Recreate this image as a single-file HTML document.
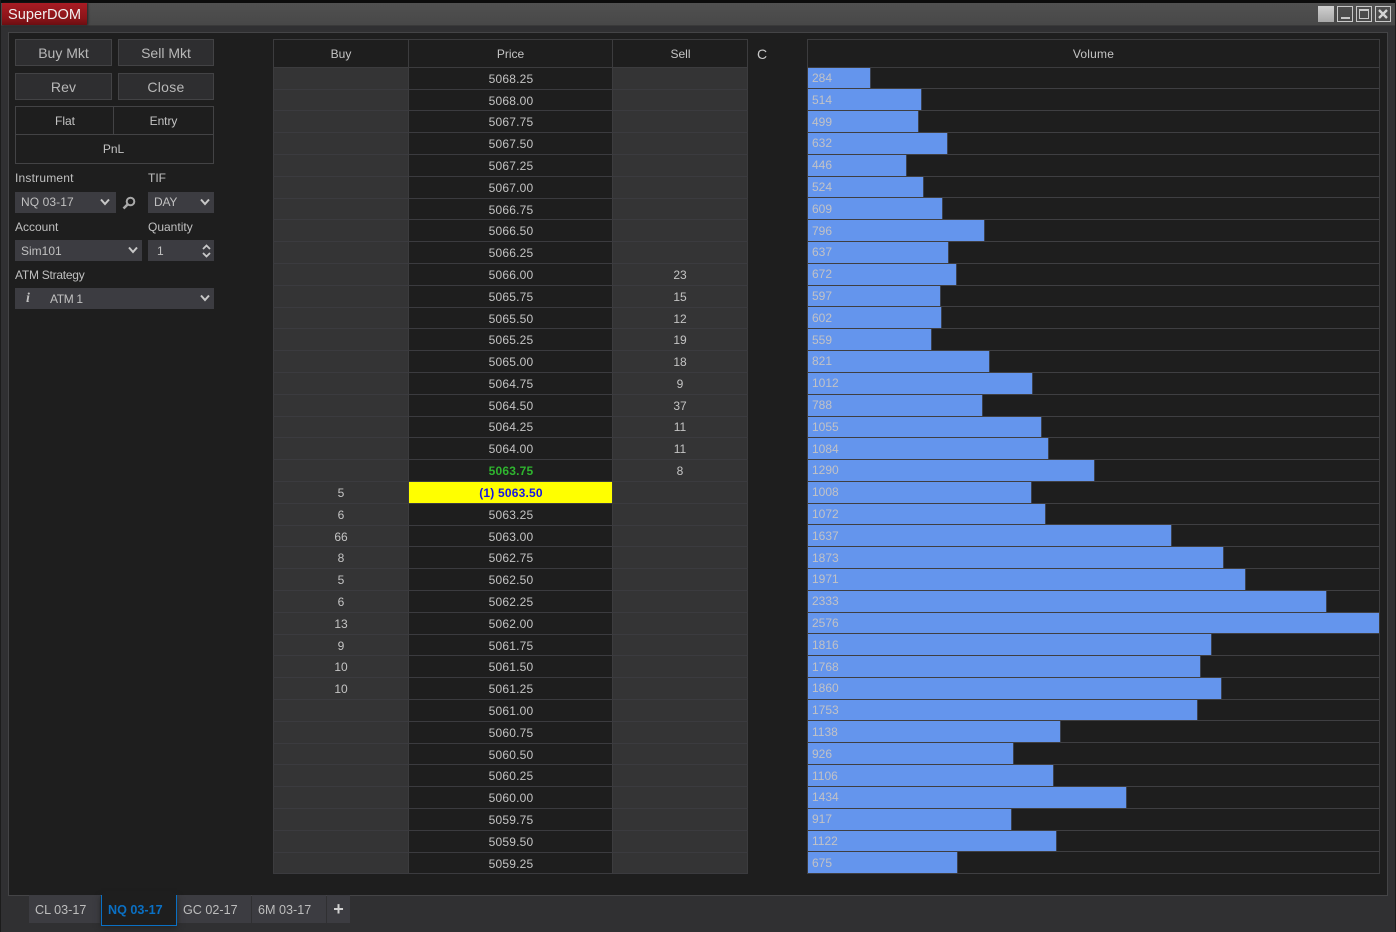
<!DOCTYPE html>
<html><head><meta charset="utf-8"><title>SuperDOM</title>
<style>
*{box-sizing:border-box;margin:0;padding:0}
html,body{width:1396px;height:932px;overflow:hidden;background:#303032}
body{position:relative;font:12px "Liberation Sans",sans-serif;color:#c4c4c4}
.a{position:absolute}
#top{left:0;top:0;width:1396px;height:3px;background:#0c0c0c}
#lb{left:0;top:0;width:1px;height:932px;background:#1c1c1c}
#rb{left:1395px;top:0;width:1px;height:932px;background:#1c1c1c}
#bar{left:1px;top:3px;width:1394px;height:23px;background:linear-gradient(#505050,#484848);border-bottom:1px solid #3a3a3a}
#tt{left:2px;top:3px;width:85px;height:22px;background:linear-gradient(#a81c24,#8a1418 70%,#6c0e12);color:#f0f0f0;font-size:14.6px;line-height:22px;padding:1px 0 0 6px;box-shadow:1px 0 2px #222}
.wb{top:6px;width:16px;height:16px;border:1px solid #c8c8c8}
#panel{left:8px;top:32px;width:1380px;height:864px;background:#1e1e1e;border:1px solid #444446}
.btn{height:27px;background:#2e2e30;border:1px solid #434345;text-align:center;font-size:14px;line-height:25px;padding-top:1px;color:#b8b8b8}
.sm{text-align:center;line-height:27px;color:#c4c4c4}
.lb{color:#c0c0c0;line-height:14px}
.in{height:21px;background:#3c3c41;color:#c0c0c0;line-height:21px;padding-left:6px}
.in svg{position:absolute;top:6px}
#hd{left:273px;top:39px;width:475px;height:29px;border:1px solid #3c3c3e;background:#1e1e1e}
.hc{top:39px;height:29px;text-align:center;line-height:29px;padding-top:1px;color:#c4c4c4}
.r{position:absolute;left:273px;width:475px;height:22px;background:#1e1e1e;border-bottom:1px solid #3b3b3f;border-left:1px solid #3c3c3e;border-right:1px solid #3c3c3e;line-height:21px;text-align:center;color:#c4c4c4}
.r.s{height:21px;line-height:20px}
.r b{font-weight:normal;position:absolute;top:0;bottom:0;display:block;padding-top:1px}
.r.n b{padding-top:0}
.r b.b{left:0;width:135px;background:#343435;border-right:1px solid #3c3c3e}
.r b.p{left:135px;width:204px;letter-spacing:.2px}
.r b.e{left:338px;width:135px;background:#343435;border-left:1px solid #3c3c3e}
.v{position:absolute;left:807px;width:573px;height:22px;background:#1e1e1e;border-bottom:1px solid #3f3f42;border-left:1px solid #3c3c3e;border-right:1px solid #3c3c3e}
.v.s{height:21px}
.v i{position:absolute;left:0;top:0;bottom:0;background:#6495ed;border-right:1px solid #3a4150;font-style:normal;color:#c2c2c6;padding-left:4px;line-height:20px;white-space:nowrap}
.v.u i{padding-top:1px}
.tab{top:895px;height:28px;background:#3c3c41;line-height:28px;font-size:12.6px;color:#bdbdbd;padding:1px 0 0 6px}
</style></head><body>
<div class="a" id="top"></div><div class="a" id="lb"></div><div class="a" id="rb"></div>
<div class="a" id="bar"></div>
<div class="a" id="tt">SuperDOM</div>
<div class="a" style="left:1318px;top:6px;width:16px;height:16px;background:linear-gradient(#d0d0d0,#a8a8a8)"></div>
<div class="a wb" style="left:1337px"><div class="a" style="left:3px;top:10px;width:9px;height:2px;background:#c8c8c8"></div></div>
<div class="a wb" style="left:1356px"><div class="a" style="left:2px;top:2px;width:10px;height:10px;border:1px solid #c8c8c8;border-top-width:2px"></div></div>
<div class="a wb" style="left:1375px"><svg class="a" style="left:2px;top:2px" width="10" height="10" viewBox="0 0 10 10"><path d="M1 1L9 9M9 1L1 9" stroke="#d4d4d4" stroke-width="2.4" fill="none"/></svg></div>

<div class="a" id="panel"></div>
<div class="a btn" style="left:15px;top:39px;width:97px">Buy Mkt</div>
<div class="a btn" style="left:118px;top:39px;width:96px">Sell Mkt</div>
<div class="a btn" style="left:15px;top:73px;width:97px;letter-spacing:.1px">Rev</div>
<div class="a btn" style="left:118px;top:73px;width:96px;letter-spacing:.3px">Close</div>
<div class="a" style="left:15px;top:106px;width:199px;height:58px;border:1px solid #434345"></div>
<div class="a" style="left:113px;top:107px;width:1px;height:27px;background:#434345"></div>
<div class="a" style="left:16px;top:134px;width:197px;height:1px;background:#434345"></div>
<div class="a sm" style="left:16px;top:108px;width:98px">Flat</div>
<div class="a sm" style="left:114px;top:108px;width:99px;letter-spacing:-.05px">Entry</div>
<div class="a sm" style="left:15px;top:135px;width:197px;line-height:28px">PnL</div>

<div class="a lb" style="left:15px;top:171px;letter-spacing:.2px">Instrument</div>
<div class="a lb" style="left:148px;top:171px">TIF</div>
<div class="a in" style="left:15px;top:192px;width:101px;letter-spacing:.1px">NQ 03-17<svg style="left:85px" width="10" height="8" viewBox="0 0 10 8"><path d="M1 1.5L5 6L9 1.5" stroke="#c8c8c8" stroke-width="2" fill="none"/></svg></div>
<svg class="a" style="left:122px;top:196px" width="14" height="14" viewBox="0 0 14 14"><circle cx="8.5" cy="5.5" r="3.8" stroke="#a8a8a8" stroke-width="2" fill="none"/><path d="M5.5 8.5L1.5 12.5" stroke="#a8a8a8" stroke-width="2.6" fill="none"/></svg>
<div class="a in" style="left:148px;top:192px;width:66px;letter-spacing:-.2px">DAY<svg style="left:52px" width="10" height="8" viewBox="0 0 10 8"><path d="M1 1.5L5 6L9 1.5" stroke="#c8c8c8" stroke-width="2" fill="none"/></svg></div>
<div class="a lb" style="left:15px;top:220px">Account</div>
<div class="a lb" style="left:148px;top:220px">Quantity</div>
<div class="a in" style="left:15px;top:240px;width:127px;padding-top:1px">Sim101<svg style="left:113px" width="10" height="8" viewBox="0 0 10 8"><path d="M1 1.5L5 6L9 1.5" stroke="#c8c8c8" stroke-width="2" fill="none"/></svg></div>
<div class="a in" style="left:148px;top:240px;width:66px;padding:1px 0 0 9px">1<svg style="left:54px;top:4px" width="9" height="14" viewBox="0 0 9 14"><path d="M1 5L4.5 1.5L8 5M1 9L4.5 12.5L8 9" stroke="#c8c8c8" stroke-width="1.8" fill="none"/></svg></div>
<div class="a lb" style="left:15px;top:268px;letter-spacing:-.25px">ATM Strategy</div>
<div class="a in" style="left:15px;top:288px;width:199px;padding:1px 0 0 35px;letter-spacing:-.35px">ATM 1<svg style="left:185px" width="10" height="8" viewBox="0 0 10 8"><path d="M1 1.5L5 6L9 1.5" stroke="#c8c8c8" stroke-width="2" fill="none"/></svg></div>
<div class="a" style="left:23px;top:288px;width:10px;height:21px;line-height:21px;text-align:center;font:italic bold 14px/21px 'Liberation Serif',serif;color:#c0c0c0">i</div>

<div class="a" id="hd"></div>
<div class="a" style="left:408px;top:39px;width:1px;height:29px;background:#3c3c3e"></div>
<div class="a" style="left:612px;top:39px;width:1px;height:29px;background:#3c3c3e"></div>
<div class="a hc" style="left:274px;width:134px">Buy</div>
<div class="a hc" style="left:409px;width:203px">Price</div>
<div class="a hc" style="left:613px;width:135px">Sell</div>
<div class="a" style="left:757px;top:46px;font-size:14px;line-height:17px;color:#c8c8c8">C</div>
<div class="a" style="left:807px;top:39px;width:573px;height:29px;border:1px solid #3c3c3e;text-align:center;line-height:27px;padding-top:1px;letter-spacing:.2px;color:#c4c4c4">Volume</div>

<div class="r" style="top:68px"><b class="b"></b><b class="p">5068.25</b><b class="e"></b></div>
<div class="r s" style="top:90px"><b class="b"></b><b class="p">5068.00</b><b class="e"></b></div>
<div class="r" style="top:111px"><b class="b"></b><b class="p">5067.75</b><b class="e"></b></div>
<div class="r" style="top:133px"><b class="b"></b><b class="p">5067.50</b><b class="e"></b></div>
<div class="r" style="top:155px"><b class="b"></b><b class="p">5067.25</b><b class="e"></b></div>
<div class="r" style="top:177px"><b class="b"></b><b class="p">5067.00</b><b class="e"></b></div>
<div class="r s" style="top:199px"><b class="b"></b><b class="p">5066.75</b><b class="e"></b></div>
<div class="r" style="top:220px"><b class="b"></b><b class="p">5066.50</b><b class="e"></b></div>
<div class="r" style="top:242px"><b class="b"></b><b class="p">5066.25</b><b class="e"></b></div>
<div class="r" style="top:264px"><b class="b"></b><b class="p">5066.00</b><b class="e">23</b></div>
<div class="r" style="top:286px"><b class="b"></b><b class="p">5065.75</b><b class="e">15</b></div>
<div class="r s" style="top:308px"><b class="b"></b><b class="p">5065.50</b><b class="e">12</b></div>
<div class="r" style="top:329px"><b class="b"></b><b class="p">5065.25</b><b class="e">19</b></div>
<div class="r" style="top:351px"><b class="b"></b><b class="p">5065.00</b><b class="e">18</b></div>
<div class="r" style="top:373px"><b class="b"></b><b class="p">5064.75</b><b class="e">9</b></div>
<div class="r" style="top:395px"><b class="b"></b><b class="p">5064.50</b><b class="e">37</b></div>
<div class="r s n" style="top:417px"><b class="b"></b><b class="p">5064.25</b><b class="e">11</b></div>
<div class="r" style="top:438px"><b class="b"></b><b class="p">5064.00</b><b class="e">11</b></div>
<div class="r" style="top:460px"><b class="b"></b><b class="p" style="color:#2fb52f;font-weight:bold">5063.75</b><b class="e">8</b></div>
<div class="r" style="top:482px"><b class="b">5</b><b class="p" style="background:#ffff00;color:#1414e6;font-weight:bold">(1) 5063.50</b><b class="e"></b></div>
<div class="r" style="top:504px"><b class="b">6</b><b class="p">5063.25</b><b class="e"></b></div>
<div class="r s" style="top:526px"><b class="b">66</b><b class="p">5063.00</b><b class="e"></b></div>
<div class="r" style="top:547px"><b class="b">8</b><b class="p">5062.75</b><b class="e"></b></div>
<div class="r" style="top:569px"><b class="b">5</b><b class="p">5062.50</b><b class="e"></b></div>
<div class="r" style="top:591px"><b class="b">6</b><b class="p">5062.25</b><b class="e"></b></div>
<div class="r" style="top:613px"><b class="b">13</b><b class="p">5062.00</b><b class="e"></b></div>
<div class="r s" style="top:635px"><b class="b">9</b><b class="p">5061.75</b><b class="e"></b></div>
<div class="r" style="top:656px"><b class="b">10</b><b class="p">5061.50</b><b class="e"></b></div>
<div class="r" style="top:678px"><b class="b">10</b><b class="p">5061.25</b><b class="e"></b></div>
<div class="r" style="top:700px"><b class="b"></b><b class="p">5061.00</b><b class="e"></b></div>
<div class="r" style="top:722px"><b class="b"></b><b class="p">5060.75</b><b class="e"></b></div>
<div class="r s" style="top:744px"><b class="b"></b><b class="p">5060.50</b><b class="e"></b></div>
<div class="r" style="top:765px"><b class="b"></b><b class="p">5060.25</b><b class="e"></b></div>
<div class="r" style="top:787px"><b class="b"></b><b class="p">5060.00</b><b class="e"></b></div>
<div class="r" style="top:809px"><b class="b"></b><b class="p">5059.75</b><b class="e"></b></div>
<div class="r" style="top:831px"><b class="b"></b><b class="p">5059.50</b><b class="e"></b></div>
<div class="r" style="top:853px;height:21px;line-height:20px"><b class="b"></b><b class="p">5059.25</b><b class="e"></b></div>

<div class="v s" style="top:68px"><i style="width:63px">284</i></div>
<div class="v u" style="top:89px"><i style="width:114px">514</i></div>
<div class="v u" style="top:111px"><i style="width:111px">499</i></div>
<div class="v" style="top:133px"><i style="width:140px">632</i></div>
<div class="v" style="top:155px"><i style="width:99px">446</i></div>
<div class="v s" style="top:177px"><i style="width:116px">524</i></div>
<div class="v u" style="top:198px"><i style="width:135px">609</i></div>
<div class="v u" style="top:220px"><i style="width:177px">796</i></div>
<div class="v" style="top:242px"><i style="width:141px">637</i></div>
<div class="v" style="top:264px"><i style="width:149px">672</i></div>
<div class="v s" style="top:286px"><i style="width:133px">597</i></div>
<div class="v u" style="top:307px"><i style="width:134px">602</i></div>
<div class="v u" style="top:329px"><i style="width:124px">559</i></div>
<div class="v" style="top:351px"><i style="width:182px">821</i></div>
<div class="v" style="top:373px"><i style="width:225px">1012</i></div>
<div class="v" style="top:395px"><i style="width:175px">788</i></div>
<div class="v s" style="top:417px"><i style="width:234px">1055</i></div>
<div class="v u" style="top:438px"><i style="width:241px">1084</i></div>
<div class="v" style="top:460px"><i style="width:287px">1290</i></div>
<div class="v" style="top:482px"><i style="width:224px">1008</i></div>
<div class="v s" style="top:504px"><i style="width:238px">1072</i></div>
<div class="v u" style="top:525px"><i style="width:364px">1637</i></div>
<div class="v u" style="top:547px"><i style="width:416px">1873</i></div>
<div class="v" style="top:569px"><i style="width:438px">1971</i></div>
<div class="v" style="top:591px"><i style="width:519px">2333</i></div>
<div class="v s" style="top:613px"><i style="width:571px;border-right:0">2576</i></div>
<div class="v u" style="top:634px"><i style="width:404px">1816</i></div>
<div class="v u" style="top:656px"><i style="width:393px">1768</i></div>
<div class="v" style="top:678px"><i style="width:414px">1860</i></div>
<div class="v s" style="top:700px"><i style="width:390px">1753</i></div>
<div class="v u" style="top:721px"><i style="width:253px">1138</i></div>
<div class="v u" style="top:743px"><i style="width:206px">926</i></div>
<div class="v u" style="top:765px"><i style="width:246px">1106</i></div>
<div class="v" style="top:787px"><i style="width:319px">1434</i></div>
<div class="v" style="top:809px"><i style="width:204px">917</i></div>
<div class="v s" style="top:831px"><i style="width:249px">1122</i></div>
<div class="v u" style="top:852px"><i style="width:150px">675</i></div>

<div class="a tab" style="left:29px;width:71px">CL 03-17</div>
<div class="a tab" style="left:177px;width:74px">GC 02-17</div>
<div class="a tab" style="left:252px;width:74px">6M 03-17</div>
<div class="a tab" style="left:327px;width:23px;padding:0;text-align:center;font-size:18px;font-weight:bold;line-height:28px;color:#d0d0d0">+</div>
<div class="a" style="left:101px;top:895px;width:76px;height:31px;background:#1e1e1e;border:1px solid #0a70c4;border-top:0;color:#0a70c4;font-weight:bold;font-size:12.6px;line-height:28px;padding:1px 0 0 6px;box-shadow:0 2px 6px #222">NQ 03-17</div>
</body></html>
